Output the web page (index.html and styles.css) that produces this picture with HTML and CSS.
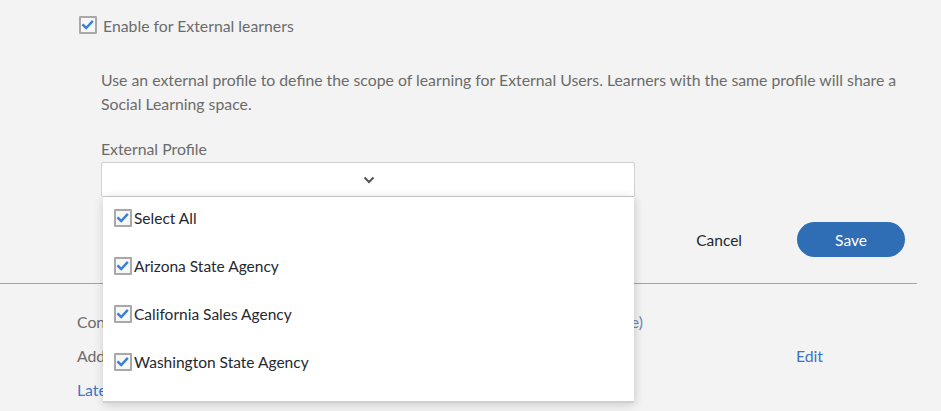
FILE: index.html
```html
<!DOCTYPE html>
<html>
<head>
<meta charset="utf-8">
<link rel="stylesheet" href="styles.css">
</head>
<body>
<div class="page">
  <div class="enable">
    <span class="cb"><svg width="16" height="16" viewBox="0 0 16 16"><path d="M3.5 8.2 L6.6 11.2 L12.8 4.6" fill="none" stroke="#3b7fd8" stroke-width="2.6" stroke-linecap="square"/></svg></span>
    <span class="enable-label">Enable for External learners</span>
  </div>
  <div class="section">
    <p class="desc">Use an external profile to define the scope of learning for External Users. Learners with the same profile will share a<br>Social Learning space.</p>
    <div class="field-label">External Profile</div>
    <div class="select-wrap">
      <div class="select">
        <svg class="chev" width="12" height="8" viewBox="0 0 12 8"><path d="M1.5 1.5 L6 6 L10.5 1.5" fill="none" stroke="#555" stroke-width="2"/></svg>
      </div>
      <div class="panel">
        <div class="opt"><span class="cb"><svg width="16" height="16" viewBox="0 0 16 16"><path d="M3.5 8.2 L6.6 11.2 L12.8 4.6" fill="none" stroke="#3b7fd8" stroke-width="2.6" stroke-linecap="square"/></svg></span><span>Select All</span></div>
        <div class="opt"><span class="cb"><svg width="16" height="16" viewBox="0 0 16 16"><path d="M3.5 8.2 L6.6 11.2 L12.8 4.6" fill="none" stroke="#3b7fd8" stroke-width="2.6" stroke-linecap="square"/></svg></span><span>Arizona State Agency</span></div>
        <div class="opt"><span class="cb"><svg width="16" height="16" viewBox="0 0 16 16"><path d="M3.5 8.2 L6.6 11.2 L12.8 4.6" fill="none" stroke="#3b7fd8" stroke-width="2.6" stroke-linecap="square"/></svg></span><span>California Sales Agency</span></div>
        <div class="opt"><span class="cb"><svg width="16" height="16" viewBox="0 0 16 16"><path d="M3.5 8.2 L6.6 11.2 L12.8 4.6" fill="none" stroke="#3b7fd8" stroke-width="2.6" stroke-linecap="square"/></svg></span><span>Washington State Agency</span></div>
      </div>
    </div>
  </div>
  <div class="actions">
    <button class="cancel">Cancel</button>
    <button class="save">Save</button>
  </div>
</div>
<div class="rule"></div>
<div class="lower">
  <div class="row"><div class="config"><span class="muted">Configure the profile used to group External learners</span><span class="soft">(None)</span></div></div>
  <div class="row"><span class="muted">Add learners to social learning spaces</span><a class="link edit">Edit</a></div>
  <div class="row"><a class="link">Latest updates</a></div>
</div>
</body>
</html>
```

FILE: styles.css
```css
html, body {
  margin: 0;
  padding: 0;
}
body {
  background: #f3f3f3;
  font-family: Lato, "Noto Sans", sans-serif;
  font-size: 15.8px;
  color: #6b6b6b;
  width: 941px;
  height: 411px;
  overflow: hidden;
}
.page {
  padding-left: 79px;
  padding-right: 36px;
}
.enable {
  display: flex;
  align-items: center;
  height: 18px;
  margin-top: 16px;
  gap: 6px;
}
.cb {
  box-sizing: border-box;
  width: 18px;
  height: 18px;
  border: 2px solid #a9a9a9;
  border-radius: 1px;
  background: #f7f7f7;
  display: inline-flex;
  flex: none;
}
.cb svg {
  display: block;
  margin: -1px 0 0 -1px;
}
.enable-label {
  color: #6b6b6b;
}
.section {
  padding-left: 22px;
}
.desc {
  margin: 34px 0 0;
  line-height: 24px;
  white-space: nowrap;
}
.field-label {
  margin-top: 24px;
  line-height: 18px;
}
.select-wrap {
  position: relative;
  margin-top: 4px;
  width: 534px;
}
.select {
  box-sizing: border-box;
  height: 35px;
  background: #fff;
  border: 1px solid #cfcfcf;
  border-radius: 2px;
  display: flex;
  align-items: center;
  justify-content: center;
}
.chev {
  margin-left: 2px;
}
.panel {
  position: absolute;
  left: 2px;
  top: 35px;
  width: 531px;
  height: 206px;
  box-sizing: border-box;
  background: #fff;
  border-bottom: 2px solid #cfcfcf;
  box-shadow: 0 2px 10px rgba(0, 0, 0, 0.12), 2px 0 8px rgba(0, 0, 0, 0.06);
  padding-top: 12px;
  z-index: 2;
}
.opt {
  display: flex;
  align-items: center;
  height: 18px;
  margin-bottom: 30px;
  padding-left: 11px;
  gap: 2px;
  color: #26292f;
  font-size: 15.5px;
}
.actions {
  display: flex;
  justify-content: flex-end;
  align-items: center;
  margin-top: 25px;
  gap: 28px;
}
button {
  font-family: inherit;
  font-size: 15.5px;
  border: none;
  cursor: pointer;
}
.cancel {
  background: none;
  color: #26292f;
  padding: 0 27px;
}
.save {
  width: 108px;
  height: 35px;
  border-radius: 18px;
  background: #2f6db5;
  color: #fff;
}
.rule {
  width: 917px;
  height: 1px;
  background: #a3a3a3;
  margin-top: 26px;
}
.lower {
  padding-left: 77px;
  padding-right: 118px;
  padding-top: 28px;
}
.row {
  display: flex;
  justify-content: space-between;
  align-items: center;
  height: 18px;
  margin-bottom: 16px;
  white-space: nowrap;
}
.config {
  width: 566px;
  display: flex;
  justify-content: space-between;
}
.muted {
  color: #6b6b6b;
}
.soft {
  color: #6a87b0;
}
.link {
  color: #3d74c5;
}
```
